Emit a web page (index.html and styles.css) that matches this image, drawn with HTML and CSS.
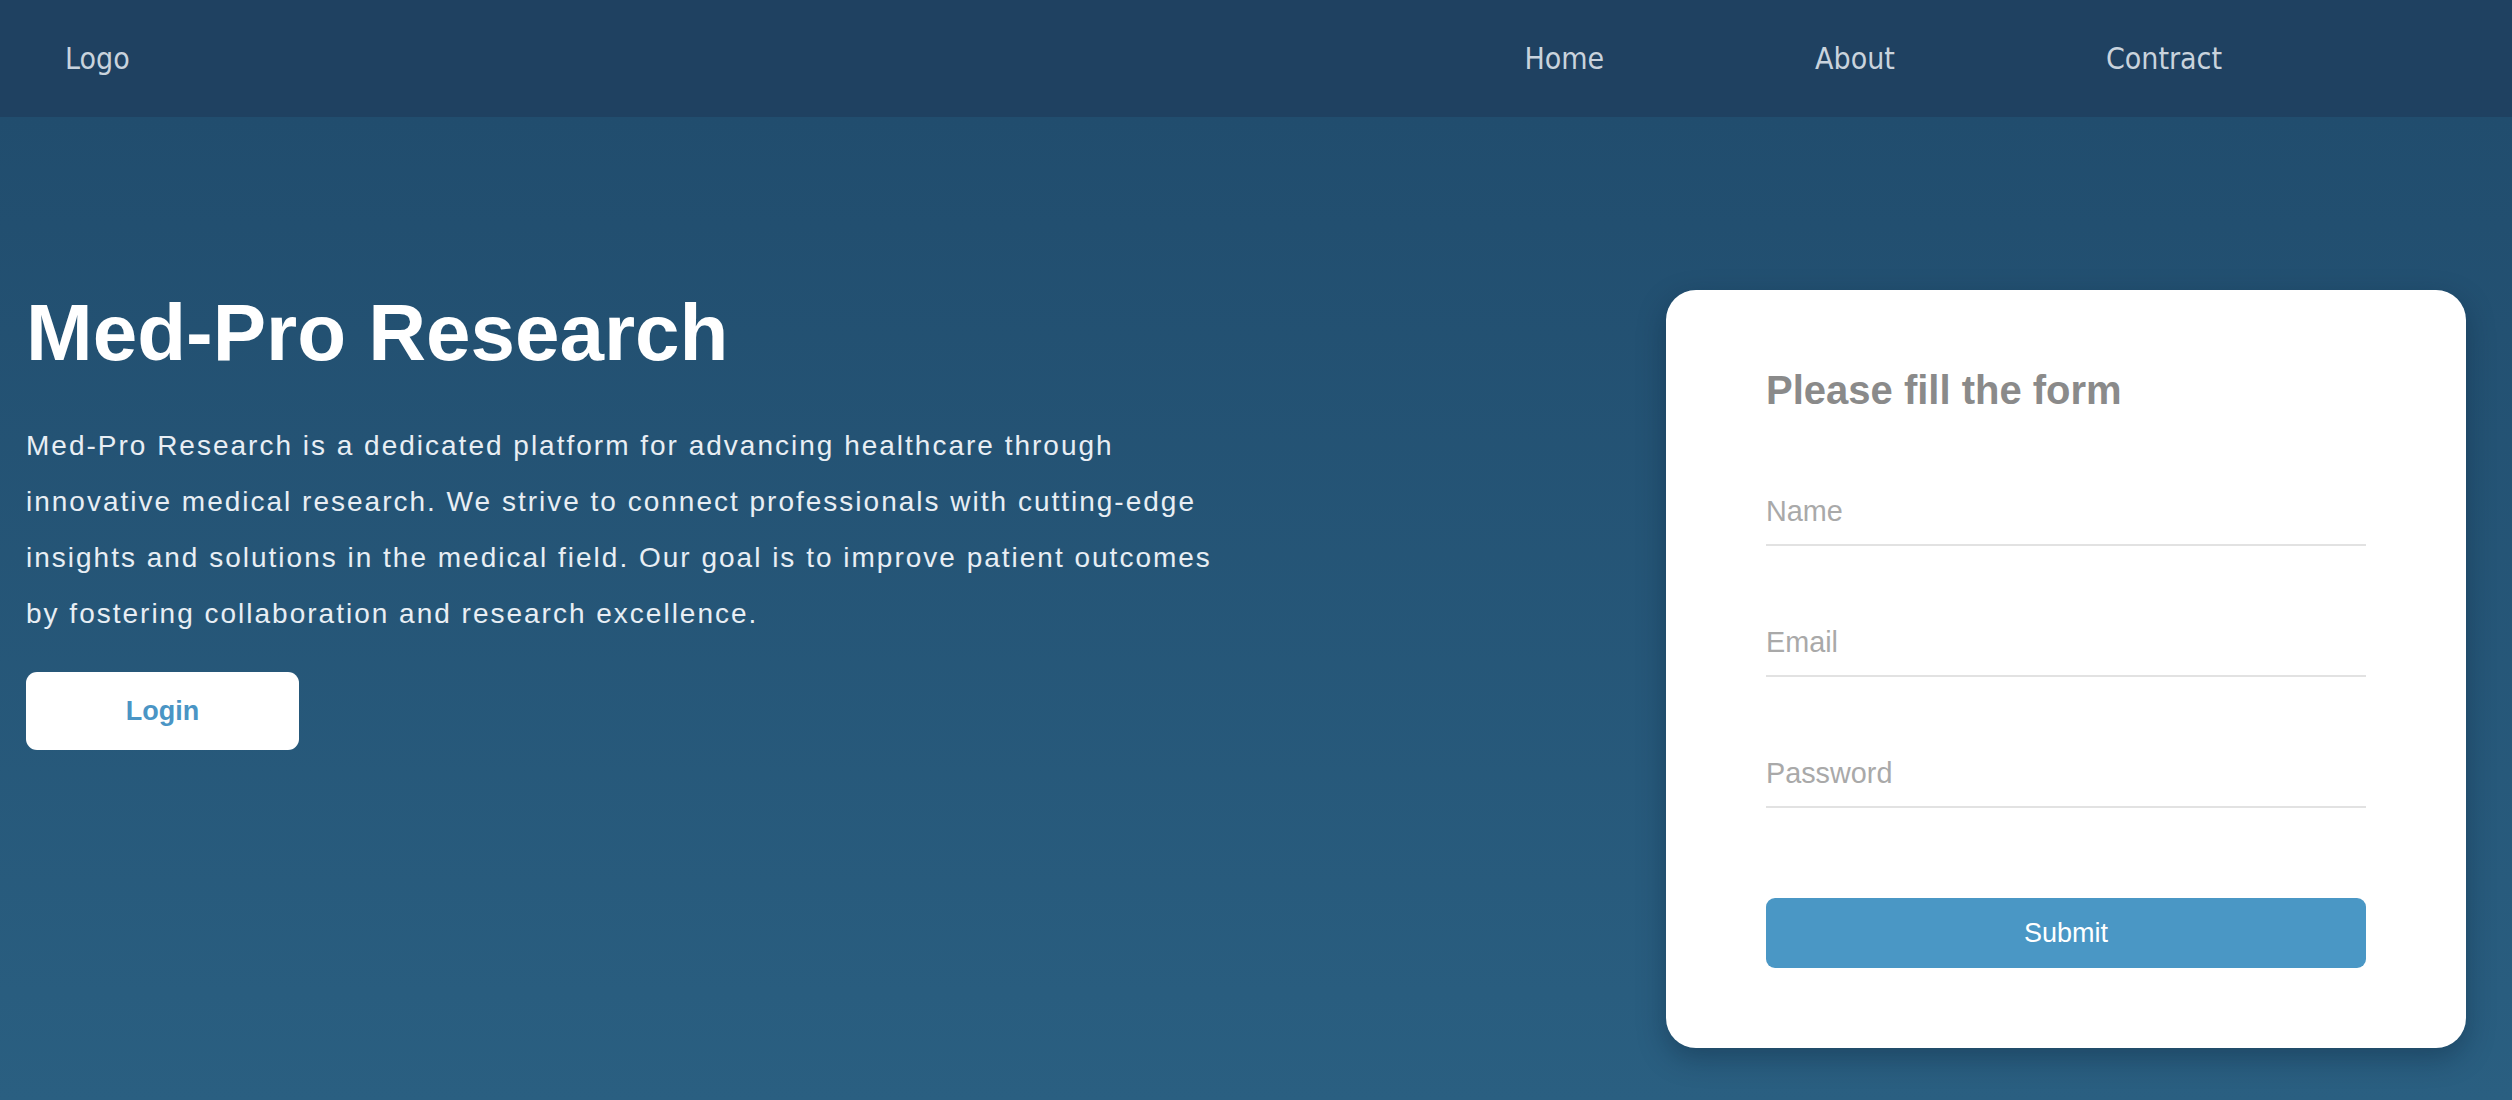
FILE: index.html
```html
<!DOCTYPE html>
<html lang="en">
<head>
<meta charset="utf-8">
<title>Med-Pro Research</title>
<link rel="stylesheet" href="styles.css">
</head>
<body>
<header class="navbar">
  <div class="logo">Logo</div>
  <nav class="nav-links">
    <a href="#" class="nav-link">Home</a>
    <a href="#" class="nav-link">About</a>
    <a href="#" class="nav-link">Contract</a>
  </nav>
</header>
<main class="hero">
  <section class="intro">
    <h1 class="intro-title">Med-Pro Research</h1>
    <p class="intro-text">Med-Pro Research is a dedicated platform for advancing healthcare through innovative medical research. We strive to connect professionals with cutting-edge insights and solutions in the medical field. Our goal is to improve patient outcomes by fostering collaboration and research excellence.</p>
    <button class="login-btn" type="button">Login</button>
  </section>
  <section class="form-card">
    <h2 class="form-title">Please fill the form</h2>
    <form class="form">
      <input class="form-input" type="text" placeholder="Name">
      <input class="form-input" type="email" placeholder="Email">
      <input class="form-input" type="password" placeholder="Password">
      <button class="submit-btn" type="button">Submit</button>
    </form>
  </section>
</main>
</body>
</html>
```

FILE: styles.css
```css
* {
  box-sizing: border-box;
}

html, body {
  margin: 0;
  padding: 0;
}

body {
  font-family: "Liberation Sans", Arial, sans-serif;
  background: #245273;
  min-height: 100vh;
}

.navbar {
  height: 117px;
  background: #1f4161;
  display: flex;
  align-items: center;
  justify-content: space-between;
  padding: 0 290px 0 65px;
  font-family: "DejaVu Sans Condensed", "DejaVu Sans", sans-serif;
  font-stretch: condensed;
  font-size: 30px;
  color: #c9d3dd;
}

.logo {
  line-height: 1;
}

.nav-links {
  display: flex;
  gap: 211px;
}

.nav-link {
  color: #c9d3dd;
  text-decoration: none;
  line-height: 1;
}

.hero {
  min-height: calc(100vh - 117px);
  background: linear-gradient(180deg, #214d6e 0%, #2a5f81 100%);
  display: flex;
  justify-content: space-between;
  align-items: flex-start;
  padding: 170px 46px 0 26px;
}

.intro {
  width: 1200px;
}

.intro-title {
  margin: 0;
  font-size: 80px;
  line-height: 92px;
  font-weight: 700;
  color: #ffffff;
}

.intro-text {
  margin: 39px 0 0;
  font-size: 28px;
  line-height: 56px;
  letter-spacing: 2px;
  color: #e8eef4;
}

.login-btn {
  margin-top: 30px;
  width: 273px;
  height: 78px;
  border: none;
  border-radius: 11px;
  background: #ffffff;
  color: #4a95c5;
  font-family: "Liberation Sans", Arial, sans-serif;
  font-size: 27px;
  font-weight: 700;
  cursor: pointer;
}

.form-card {
  margin-top: 3px;
  width: 800px;
  background: #ffffff;
  border-radius: 30px;
  padding: 77px 100px 80px;
  box-shadow: 0 10px 28px rgba(10, 30, 50, 0.35);
}

.form-title {
  margin: 0 0 73px;
  font-size: 40px;
  line-height: 46px;
  font-weight: 700;
  color: #8a8a8a;
}

.form {
  display: flex;
  flex-direction: column;
}

.form-input {
  display: block;
  width: 100%;
  height: 60px;
  padding: 0 0 8px;
  border: none;
  border-bottom: 2px solid #e2e2e2;
  font-family: "Liberation Sans", Arial, sans-serif;
  font-size: 28.8px;
  color: #555555;
  background: transparent;
  outline: none;
}

.form-input + .form-input {
  margin-top: 71px;
}

.form-input::placeholder {
  color: #a9a9a9;
}

.submit-btn {
  margin-top: 90px;
  height: 70px;
  width: 100%;
  border: none;
  border-radius: 9px;
  background: #4a97c5;
  color: #ffffff;
  font-family: "Liberation Sans", Arial, sans-serif;
  font-size: 27px;
  cursor: pointer;
}
```
